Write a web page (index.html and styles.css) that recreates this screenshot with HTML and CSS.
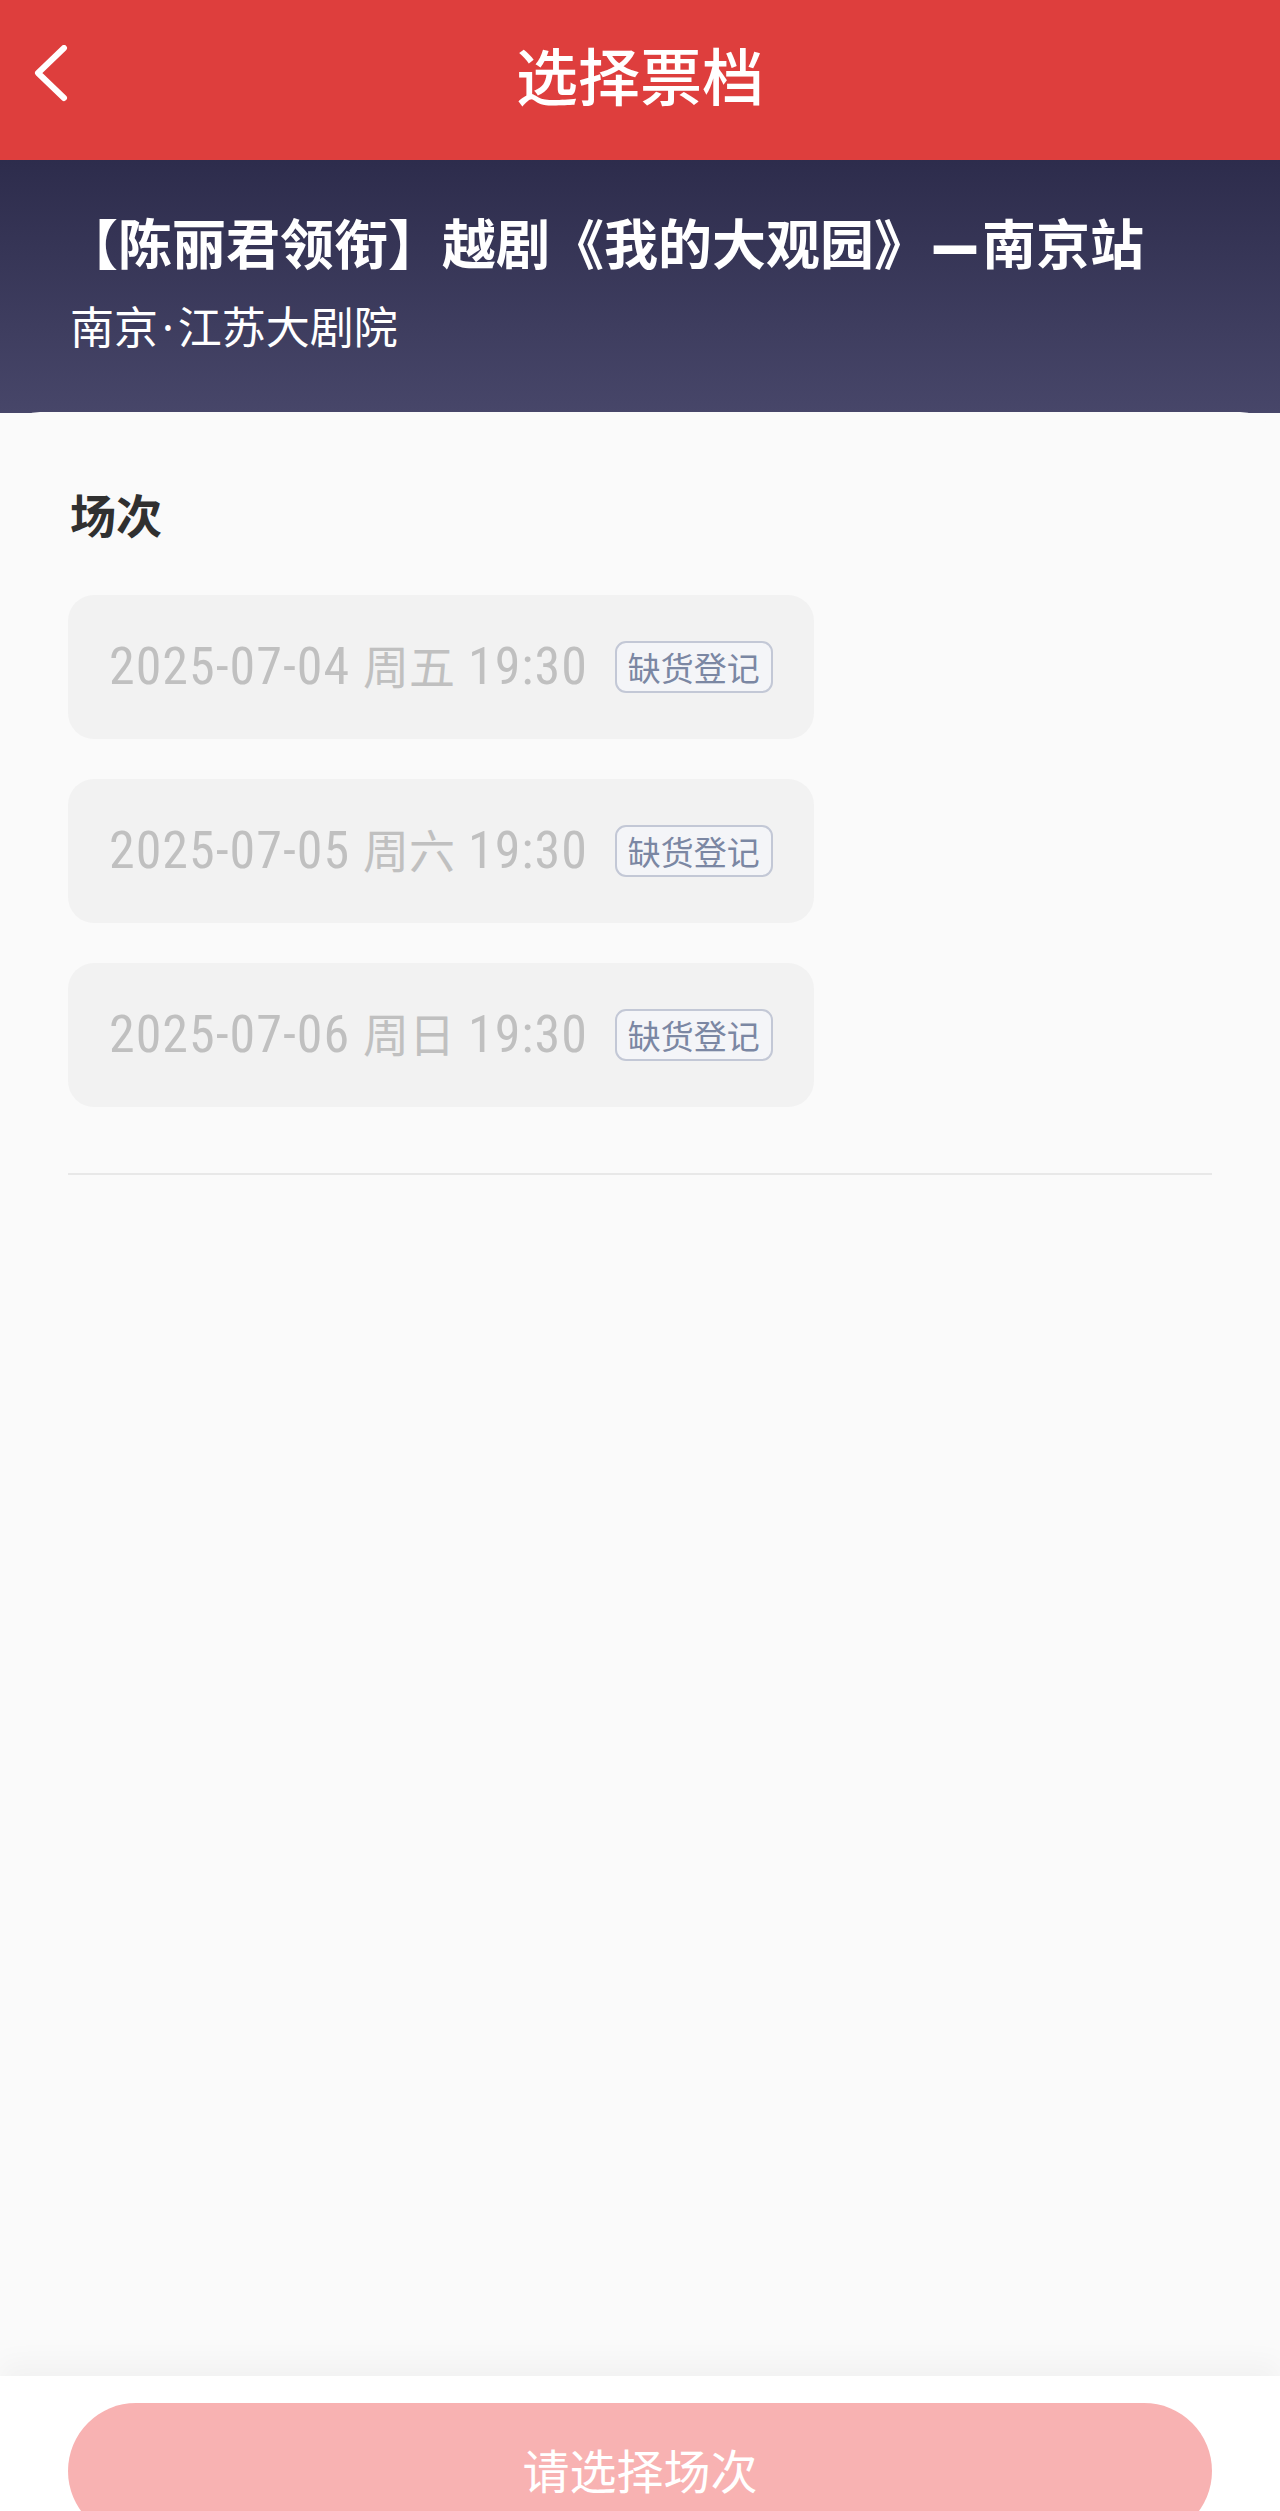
FILE: index.html
```html
<!DOCTYPE html>
<html lang="zh-CN">
<head>
  <meta charset="UTF-8" />
  <meta name="viewport" content="width=device-width, initial-scale=1.0"/>
  <title>选择票档</title>
  <link rel="stylesheet" href="styles.css">
</head>
<body>
  <div class="page">
    <header class="topbar">
      <span class="back">
        <svg width="40" height="60" viewBox="0 0 40 60">
          <path d="M31 3 L5 28 L31 53" fill="none" stroke="#fff" stroke-width="6" stroke-linecap="round" stroke-linejoin="round"/>
        </svg>
      </span>
      <h1>选择票档</h1>
    </header>

    <section class="show-info">
      <h2>【陈丽君领衔】越剧《我的大观园》<span class="dash">—</span>南京站</h2>
      <p>南京<span class="dot">·</span>江苏大剧院</p>
    </section>

    <main class="panel">
      <h3>场次</h3>
      <div class="sessions">
        <div class="session">
          <span class="date">2025-07-04 <span class="week">周五</span> 19:30</span>
          <span class="tag">缺货登记</span>
        </div>
        <div class="session">
          <span class="date">2025-07-05 <span class="week">周六</span> 19:30</span>
          <span class="tag">缺货登记</span>
        </div>
        <div class="session">
          <span class="date">2025-07-06 <span class="week">周日</span> 19:30</span>
          <span class="tag">缺货登记</span>
        </div>
      </div>
      <div class="divider"></div>
    </main>

    <footer class="bottombar">
      <button type="button" disabled>请选择场次</button>
    </footer>
  </div>
</body>
</html>
```

FILE: styles.css
```css
body {
  margin: 0;
  padding: 0;
  font-family: "Noto Sans CJK SC", "Noto Sans", sans-serif;
  background-color: #fafafa;
}
.page {
  display: flex;
  flex-direction: column;
  height: 100vh;
  overflow: hidden;
}
.topbar {
  flex: 0 0 160px;
  background-color: #de3e3d;
  display: flex;
  align-items: center;
  justify-content: center;
  position: relative;
}
.topbar h1 {
  margin: 0;
  color: #fff;
  font-size: 62px;
  font-weight: 500;
  line-height: 1;
  margin-top: -12px;
}
.back {
  position: absolute;
  left: 33px;
  top: 45px;
  display: block;
  height: 60px;
}
.show-info {
  flex: 0 0 253px;
  box-sizing: border-box;
  padding: 50px 0 0 70px;
  background: linear-gradient(180deg, #2d2c4c 0%, #474669 100%);
  color: #fff;
}
.show-info h2 {
  margin: 0;
  margin-left: -6px;
  font-size: 54px;
  font-weight: 700;
  line-height: 1.2;
}
.show-info .dash {
  font-family: "Noto Sans", sans-serif;
  font-size: 46px;
  font-weight: 800;
  display: inline-block;
  margin: 0 4px 0 4px;
  vertical-align: 5px;
  transform: scaleY(1.5);
}
.show-info p {
  margin: 22px 0 0;
  font-size: 44px;
  line-height: 1.3;
}
.show-info .dot {
  font-family: "Noto Sans", sans-serif;
  margin: 0 4px;
}
.panel {
  flex: 1;
  min-height: 0;
  background-color: #fafafa;
  border-radius: 40px 40px 0 0;
  margin-top: -1px;
  padding: 72px 68px 0;
}
.panel h3 {
  margin: 0 0 0 2px;
  font-size: 46px;
  font-weight: 700;
  color: #303030;
  line-height: 1.3;
}
.sessions {
  display: flex;
  flex-direction: column;
  gap: 40px;
  margin-top: 51px;
}
.session {
  width: 746px;
  height: 144px;
  box-sizing: border-box;
  background-color: #f2f2f2;
  border-radius: 26px;
  display: flex;
  align-items: center;
  padding-left: 41px;
}
.date {
  font-family: Roboto, "Noto Sans CJK SC", sans-serif;
  font-stretch: condensed;
  font-size: 52px;
  font-weight: 450;
  color: #c0c0c0;
  letter-spacing: 1px;
  line-height: 1;
  white-space: nowrap;
}
.date .week {
  font-family: "Noto Sans CJK SC", sans-serif;
  font-stretch: normal;
  font-size: 46px;
  font-weight: 400;
  letter-spacing: 0;
}
.tag {
  margin-left: 27px;
  height: 52px;
  box-sizing: border-box;
  padding: 0 11px;
  border: 2px solid #c3c8d6;
  border-radius: 11px;
  background-color: #f4f5f8;
  color: #7b87a3;
  font-size: 33px;
  line-height: 48px;
  white-space: nowrap;
}
.divider {
  margin-top: 66px;
  height: 2px;
  background-color: #e8e8e8;
}
.bottombar {
  flex: 0 0 135px;
  min-height: 0;
  background-color: #fff;
  box-shadow: 0 -14px 26px rgba(0, 0, 0, 0.035);
  padding: 27px 68px 0;
  box-sizing: border-box;
  position: relative;
}
.bottombar button {
  width: 100%;
  height: 136px;
  border: none;
  border-radius: 68px;
  background-color: #f8b2b2;
  color: #fff;
  font-family: "Noto Sans CJK SC", sans-serif;
  font-size: 47px;
  padding: 0;
  padding-bottom: 6px;
}
```
